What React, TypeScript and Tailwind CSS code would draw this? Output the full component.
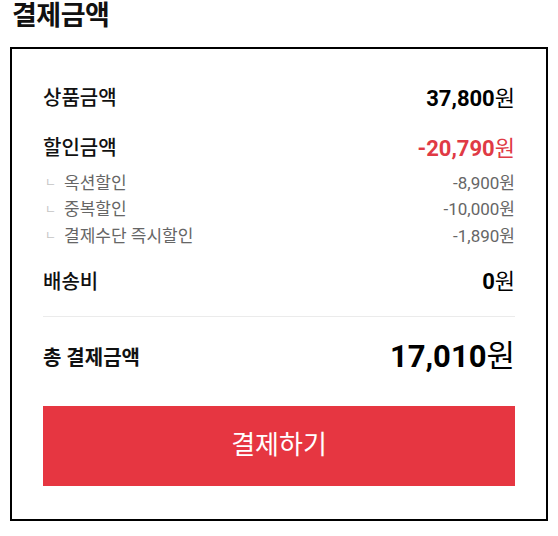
const font = "font-['Roboto','Noto_Sans_CJK_KR',sans-serif]";

function Won({ amount, className }: { amount: string; className: string }) {
  return (
    <span className={className}>
      {amount}
      <span className="font-normal">원</span>
    </span>
  );
}

const discounts = [
  { label: "옥션할인", amount: "-8,900원" },
  { label: "중복할인", amount: "-10,000원" },
  { label: "결제수단 즉시할인", amount: "-1,890원" },
];

export default function App() {
  return (
    <div className={`${font} bg-white px-[10px] text-[#111]`}>
      <h2 className="h-[31px] pt-[1px] pl-[2px] text-[27px] font-bold leading-[30px] tracking-[-0.5px]">결제금액</h2>
      <section className="mt-[16px] border-2 border-black px-[31px] pt-[37px] pb-[33px]">
        <div className="flex h-[24px] items-center justify-between">
          <span className="text-[20px] font-medium">상품금액</span>
          <Won amount="37,800" className="text-[22px] font-bold text-black" />
        </div>
        <div className="mt-[26px] flex h-[24px] items-center justify-between">
          <span className="text-[20px] font-medium">할인금액</span>
          <Won amount="-20,790" className="text-[22px] font-bold text-[#e03a45]" />
        </div>
        <ul className="mt-[10px]">
          {discounts.map((d) => (
            <li key={d.label} className="flex h-[26.5px] items-center justify-between text-[17px] text-[#666]">
              <span className="flex items-center">
                <span className="mr-[8px] ml-[2px] text-[12px] text-[#c4c4c4]">ㄴ</span>
                {d.label}
              </span>
              <span>{d.amount}</span>
            </li>
          ))}
        </ul>
        <div className="mt-[20px] flex h-[24px] items-center justify-between">
          <span className="text-[20px] font-medium">배송비</span>
          <Won amount="0" className="text-[22px] font-bold text-black" />
        </div>
        <div className="mt-[22px] border-t border-[#ebebeb]" />
        <div className="mt-[23px] flex h-[36px] items-center justify-between">
          <span className="text-[20px] font-bold">총 결제금액</span>
          <Won amount="17,010" className="text-[31px] font-bold text-black" />
        </div>
        <button className="mt-[30px] flex h-[80px] w-full items-center justify-center bg-[#e63641] text-[26px] text-white">
          결제하기
        </button>
      </section>
    </div>
  );
}
